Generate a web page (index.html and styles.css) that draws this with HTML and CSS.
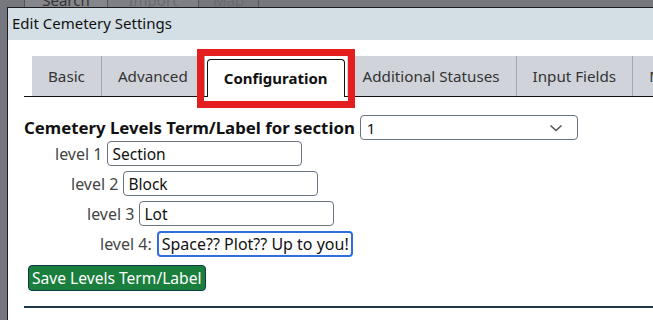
FILE: index.html
```html
<!DOCTYPE html>
<html lang="en">
<head>
    <meta charset="utf-8" />
    <title>Edit Cemetery Settings</title>
    <link rel="stylesheet" href="styles.css">
</head>
<body>
<div class="backtabs">
    <span class="bt bt-1">Search</span>
    <span class="bt bt-2">Import</span>
    <span class="bt bt-3">Map</span>
</div>
<div class="dialog">
    <div class="titlebar">Edit Cemetery Settings</div>
    <div class="content">
        <ul class="tabs">
            <li>Basic</li>
            <li>Advanced</li>
            <li class="active">Configuration</li>
            <li>Additional Statuses</li>
            <li>Input Fields</li>
            <li>Maps</li>
        </ul>
        <div class="panel">
            <div class="heading">
                <label>Cemetery Levels Term/Label for section</label>
                <div class="select">
                    <span>1</span>
                    <svg width="14" height="8" viewBox="0 0 14 8"><path d="M1.5 1.5 L7 6.5 L12.5 1.5" fill="none" stroke="#555" stroke-width="1.6"/></svg>
                </div>
            </div>
            <div class="row lv-1"><label>level 1</label><input type="text" value="Section"></div>
            <div class="row lv-2"><label>level 2</label><input type="text" value="Block"></div>
            <div class="row lv-3"><label>level 3</label><input type="text" value="Lot"></div>
            <div class="row lv-4"><label>level 4:</label><input type="text" class="focus" value="Space?? Plot?? Up to you!"></div>
            <button class="save">Save Levels Term/Label</button>
            <hr>
        </div>
    </div>
</div>
</body>
</html>
```

FILE: styles.css
```css
* {
    padding: 0;
    margin: 0;
    box-sizing: border-box;
    font-family: "Noto Sans", "Open Sans", sans-serif;
}
body {
    background-color: #76767f;
    width: 653px;
    height: 320px;
    overflow: hidden;
}
.backtabs {
    height: 7px;
    display: flex;
    overflow: hidden;
    padding-left: 24px;
}
.bt {
    display: block;
    height: 7px;
    line-height: 0;
    font-size: 15px;
    color: #333;
    border-right: 1px solid #55555c;
    text-align: center;
}
.bt-1 {
    width: 84px;
    background-color: #85858c;
    border-left: 1px solid #55555c;
}
.bt-2 {
    width: 91px;
    background-color: #7f7f87;
    color: #6a6a70;
}
.bt-3 {
    width: 60px;
    color: #6a6a70;
}
.dialog {
    margin-left: 7px;
    border-left: 1px solid #1c1c20;
    border-top: 1px solid #1c1c20;
    background-color: #fff;
    height: 313px;
}
.titlebar {
    height: 32px;
    line-height: 31px;
    background-color: #d3dfe4;
    padding-left: 4px;
    font-size: 15px;
    color: #111;
}
.content {
    padding: 16px 0 0 16px;
}
.tabs {
    display: flex;
    list-style: none;
    padding-left: 8px;
    border-bottom: 1px solid #111;
    height: 41px;
    white-space: nowrap;
}
.tabs > li {
    background-color: #d0d4da;
    border-right: 1px solid #a3a8b0;
    padding: 0 16px;
    font-size: 15.2px;
    line-height: 40px;
    color: #333;
}
.tabs > li.active {
    position: relative;
    margin: 3px 2px -1px 2px;
    background-color: #fff;
    border: 1px solid #111;
    border-bottom: none;
    border-radius: 4px 4px 0 0;
    line-height: 36px;
    font-weight: bold;
    font-size: 15px;
    color: #111;
    padding: 0 16px;
}
/* red highlight box drawn over the active tab */
.tabs > li.active::after {
    content: "";
    position: absolute;
    left: -11px;
    right: -11px;
    top: -11px;
    bottom: -11px;
    border: 7px solid #e41e1e;
}
.panel {
    padding-top: 18px;
}
.heading {
    display: flex;
    align-items: center;
    gap: 5px;
}
.heading > label {
    font-size: 16.8px;
    font-weight: bold;
    color: #111;
}
.select {
    width: 218px;
    height: 25px;
    border: 1px solid #6b7280;
    border-radius: 4px;
    display: flex;
    align-items: center;
    justify-content: space-between;
    padding: 0 14px 0 6px;
    font-size: 15px;
    color: #111;
}
.row {
    display: flex;
    align-items: center;
    gap: 5px;
    margin-top: 5px;
    height: 25px;
}
.row.lv-1 {
    margin-top: 1px;
}
.row > label {
    font-size: 16px;
    color: #444;
}
.row > input {
    width: 195px;
    height: 25px;
    border: 1px solid #6b7280;
    border-radius: 4px;
    padding: 0 4px;
    font-size: 15.5px;
    color: #111;
    outline: none;
}
.row > input.focus {
    border: 2px solid #2f6de1;
    padding: 0 3px;
    height: 26px;
    width: 196px;
    font-size: 16px;
}
.lv-1 {
    padding-left: 31px;
}
.lv-2 {
    padding-left: 47px;
}
.lv-3 {
    padding-left: 63px;
}
.lv-4 {
    padding-left: 76px;
}
.save {
    margin: 9px 0 0 4px;
    height: 26px;
    padding: 0 3px;
    background-color: #1a7e3d;
    border: 1px solid #0e3a48;
    border-radius: 4px;
    color: #fff;
    font-size: 15.6px;
}
hr {
    margin-top: 15px;
    border: none;
    border-top: 2px solid #1e3a4c;
}
```
